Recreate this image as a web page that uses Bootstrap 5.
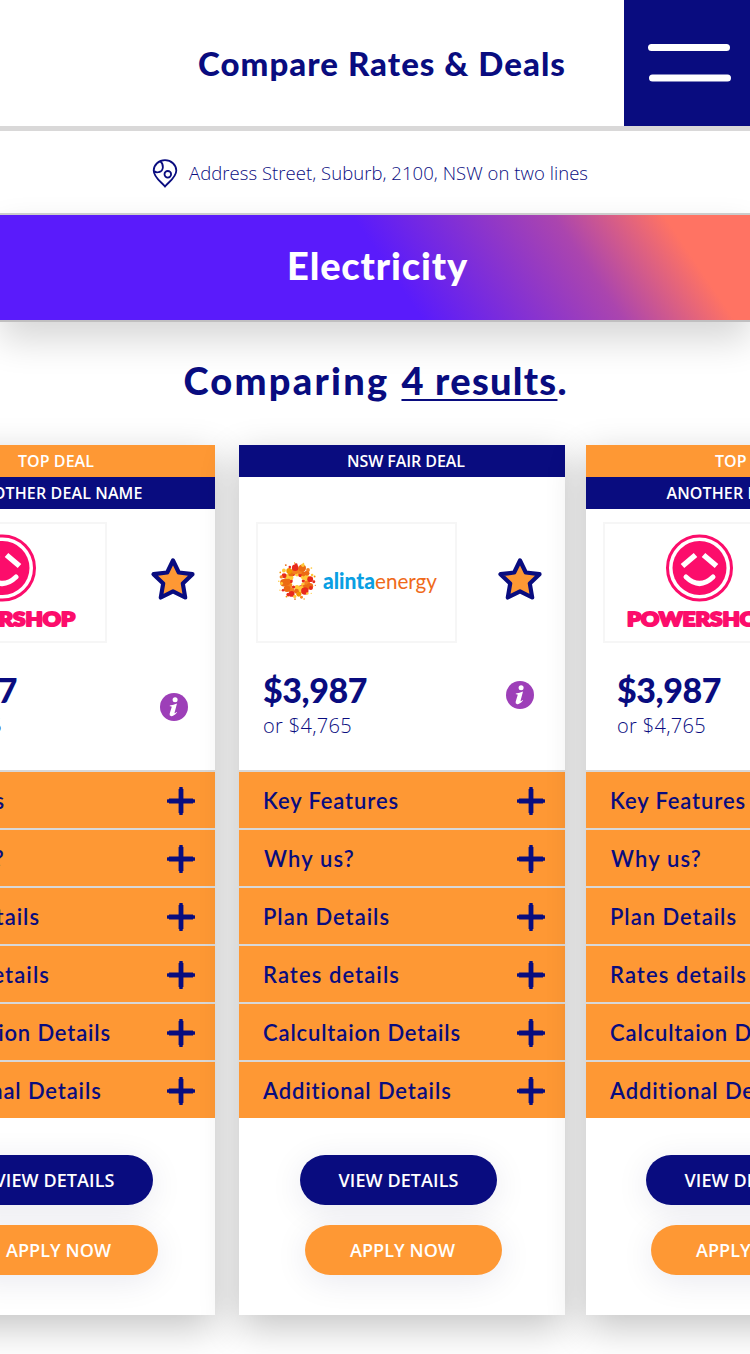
<!DOCTYPE html>
<html lang="en">
<head>
<meta charset="utf-8">
<meta name="viewport" content="width=device-width, initial-scale=1">
<title>Compare Rates &amp; Deals</title>
<link href="https://cdn.jsdelivr.net/npm/bootstrap@5.3.0/dist/css/bootstrap.min.css" rel="stylesheet">
<style>
:root{--navy:#090c7f;--amber:#fe9834}
body{font-family:"Open Sans","Noto Sans",sans-serif;color:var(--navy);background:#fff;overflow:hidden;height:1354px}
svg{display:block;flex:none}
.muli{font-family:Lato,"Open Sans",sans-serif}
.topbar{height:131px;border-bottom:5px solid #d9d8d8}
.topbar h1{font-size:33px;font-weight:900;line-height:40px;width:369px;margin:0 0 0 198px}
.menu-btn{width:126px;height:126px;background:var(--navy);border:0}
.address{height:82px;font-size:18.500px;font-weight:350;padding:2px 0 0 152px;gap:11px}
.fuel{height:109px;border-top:2px solid #ccc;border-bottom:2px solid #c0bfc0;background:linear-gradient(56deg,#5a1bfb 0,#5a1bfb 51.5%,#ab45ae 76%,#ff7363 89.5%) padding-box;box-shadow:0 18px 36px rgba(0,0,0,.16);font-size:38px;font-weight:900;padding:0 0 4px 5px}
.results{height:123px;font-size:38px;font-weight:900;padding-top:33px;line-height:50px}
.results u{text-decoration-thickness:2px;text-underline-offset:4px;text-decoration-skip-ink:none}
.deals{margin-left:-111px}
.deal{width:326px;height:870px;background:#fff;flex:none;box-shadow:0 12px 36px rgba(0,0,0,.24)}
.strip{height:32px;line-height:32px;font-size:16px;font-weight:600;color:#fff;text-align:center;padding-left:8px}
.bg-navy{background:var(--navy)}.bg-amber{background:var(--amber)}
.deal-head{height:325px}
.brand{width:201px;height:121px;border:2px solid #f6f6f6;margin-left:17px}
.price{font-size:34px;font-weight:900;line-height:40px}
.alt-price{font-size:20px;font-weight:350;line-height:28px;margin-top:2px}
.feature{height:58px;border-top:2px solid #d8d8d8;background:var(--amber) padding-box;font-size:22px;font-weight:600;padding:1px 20px 0 24px}
.pill{height:50px;width:197px;border-radius:25px;line-height:50px;font-size:18px;font-weight:600;color:#fff;text-align:center;border:0;padding:0;box-shadow:0 6px 34px rgba(9,12,80,.09)}
</style>
</head>
<body>
<svg width="0" height="0" class="position-absolute">
<symbol id="star" viewBox="0 0 46 46"><path d="M23 3.500 28.800 15.500 42.500 17.200 32.800 26.500 35.200 40.500 23 34.300 10.800 40.500 13.200 26.500 3.500 17.200 17.200 15.500Z" fill="#fe9834" stroke="#090c7f" stroke-width="4.200" stroke-linejoin="round"/></symbol>
<symbol id="info" viewBox="0 0 28 28"><circle cx="14" cy="14" r="14" fill="#9d3fb8"/><circle cx="15.1" cy="6.8" r="2.5" fill="#fff"/><path d="M9.800 12.500Q13.500 12 17 10.500L14.600 19.500Q14.200 21 16.500 18.900L17 19.400Q13.500 23.400 11.100 23.200Q9 22.700 9.700 20.400L11.700 14Q12 13.200 9.800 13.300Z" fill="#fff"/></symbol>
<symbol id="plus" viewBox="0 0 28 28"><path d="M14 2V26M2 14H26" stroke="#090c7f" stroke-width="4.800"/><path d="M14 1V27M1 14H27" stroke="#090c7f" stroke-width="3.500" stroke-linecap="round"/></symbol>
</svg>

<header class="topbar d-flex align-items-center justify-content-between">
<h1 class="muli text-nowrap" data-w="368">Compare Rates &amp; Deals</h1>
<button class="menu-btn p-0" aria-label="Menu"><svg width="126" height="126"><path d="M27.500 47.500H102.500M28.500 78H103.500" stroke="#fff" stroke-width="7" stroke-linecap="round"/></svg></button>
</header>
<div class="address d-flex align-items-center">
<svg width="26" height="29" viewBox="0 0 26 29" fill="none" stroke="#090c7f" stroke-width="1.800"><path d="M13 27.500C9.500 23 1.700 18.500 1.700 11.500A11.300 10.300 0 0 1 24.300 11.500C24.300 18.500 16.500 23 13 27.500Z"/><circle cx="15.800" cy="15.300" r="3.300"/><path d="M8 2C12 5 12 12 7 13Q4 14 2 12"/></svg>
<span class="text-nowrap" data-w="399">Address Street, Suburb, 2100, NSW on two lines</span>
</div>
<section class="fuel muli text-white d-flex align-items-center justify-content-center"><span data-w="181">Electricity</span></section>
<div class="results muli d-flex justify-content-center"><span data-w="206" class="me-2 pe-1">Comparing</span><u data-w="156">4 results</u><span>.</span></div>
<main class="deals d-flex" id="deals"></main>

<script src="https://cdn.jsdelivr.net/npm/bootstrap@5.3.0/dist/js/bootstrap.bundle.min.js"></script>
<script>
const features=[['Key Features',135],['Why us?',90],['Plan Details',126],['Rates details',136],['Calcultaion Details',197],['Additional Details',188]];
// Sunburst of the Alinta mark: rings of dots that shrink towards the rim.
const tones=['#f29400','#e8291c','#f58220','#ffc838','#ec6b14'];
const rings=[[7,12,2.1],[10.300,13,3.100],[13.300,12,3.100],[16.200,15,1.600],[18.800,13,.8]];
const dots=rings.map(([r,n,s],k)=>Array.from({length:n},(_,i)=>{
 const a=(i+k*.37)*2*Math.PI/n, q=r+((i*7+k)%3-1)*.6;
 return `<circle cx="${(20+q*Math.cos(a)).toFixed(1)}" cy="${(20+q*Math.sin(a)).toFixed(1)}" r="${(s*(.8+(i*5+k)%4*.13)).toFixed(2)}" fill="${k?tones[(i*i+k*2+i)%5]:tones[i%2?3:1]}"/>`}).join('')).join('');
const alinta=`<svg width="197" height="117" viewBox="0 0 197 117"><g transform="translate(19 37)">${dots}</g><g font-family="Lato,sans-serif" font-size="22"><text x="65" y="65" textLength="52" lengthAdjust="spacingAndGlyphs" font-weight="900" fill="#0a9fe3">alinta</text><text x="117" y="65" textLength="62" lengthAdjust="spacingAndGlyphs" fill="#ef6a1a">energy</text></g></svg>`;
const powershop=`<svg width="197" height="117" viewBox="0 0 197 117"><circle cx="94.500" cy="44" r="32" fill="none" stroke="#fc0d6b" stroke-width="3"/><circle cx="94.500" cy="44" r="27" fill="#fc0d6b"/><path d="M77.500 42 90.500 31M98.500 31 111.500 42" stroke="#fff" stroke-width="5.500"/><path d="M81 53Q94.500 66 108 53" fill="none" stroke="#fff" stroke-width="5" stroke-linecap="round"/><text x="22" y="101.500" font-family="Lato,sans-serif" font-size="19.500" font-weight="900" fill="#fc0d6b" stroke="#fc0d6b" stroke-width="2" stroke-linejoin="round" textLength="145" lengthAdjust="spacingAndGlyphs">POWERSHOP</text></svg>`;
const data=[{top:1,gap:24},{top:0,gap:21},{top:1,gap:0,price:31}];
document.getElementById('deals').innerHTML=data.map((d,i)=>`<article class="deal" style="margin-right:${d.gap}px">
<div class="deal-head d-flex flex-column">
${d.top?'<div class="strip bg-amber"><span data-w="76">TOP DEAL</span></div>':''}
<div class="strip bg-navy"><span data-w="${d.top?173:118}">${d.top?'ANOTHER DEAL NAME':'NSW FAIR DEAL'}</span></div>
<div class="d-flex align-items-center" style="margin-top:${d.top?13:45}px"><div class="brand">${d.top?powershop:alinta}</div><svg width="46" height="46" style="margin:-6px 0 0 ${i?40:43}px"><use href="#star"/></svg></div>
<div class="d-flex justify-content-between" style="padding:27px ${i?31:27}px 0 ${d.price||24}px"><div><div class="price muli"><span data-w="104">$3,987</span></div><div class="alt-price"><span data-w="89">or $4,765</span></div></div><svg width="28" height="28" style="margin-top:${i?11:23}px"><use href="#info"/></svg></div>
</div>
${features.map((f,j)=>`<div class="feature muli d-flex align-items-center justify-content-between"><span class="text-nowrap" data-w="${f[1]+1}" style="margin-left:${i==0&&j==0?-44:j==1?1:0}px">${f[0]}</span><svg width="28" height="28"><use href="#plus"/></svg></div>`).join('')}
<div class="d-flex flex-column" style="padding:37px 0 0 ${[67,61,60][i]}px;gap:20px"><button class="pill bg-navy"><span data-w="120">VIEW DETAILS</span></button><button class="pill bg-amber" style="margin-left:5px;padding-right:2px"><span data-w="105">APPLY NOW</span></button></div>
</article>`).join('');
// Track each label out or in to its intended measure.
document.querySelectorAll('[data-w]').forEach(e=>{const r=document.createRange();r.selectNodeContents(e);const w=r.getBoundingClientRect().width;if(e.tagName==='H1')e.style.width='auto';e.style.letterSpacing=((+e.dataset.w-w)/e.textContent.length).toFixed(3)+'px'});
</script>
</body>
</html>
